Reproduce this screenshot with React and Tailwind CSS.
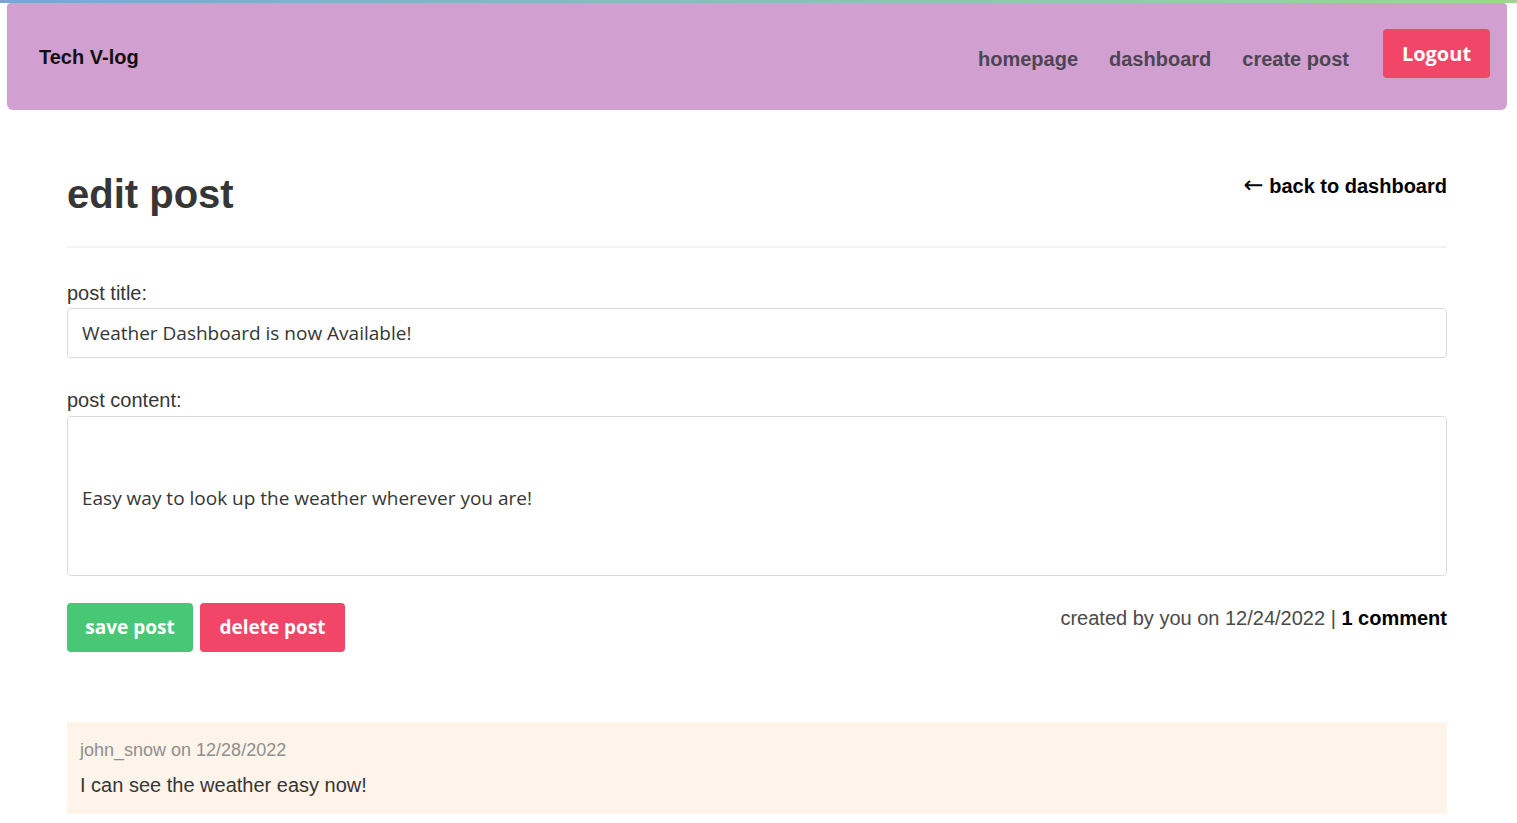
import { useState } from 'react';

const arial = { fontFamily: '"Liberation Sans", Arial, sans-serif' };
const ui = { fontFamily: '"Open Sans", "Noto Sans", sans-serif' };

function Header() {
  return (
    <header className="ml-[7px] mr-[10px] h-[107px] rounded-b-md rounded-t-sm bg-[#d19fd0] flex items-center justify-between pl-[32px] pr-[17px]">
      <a href="#" className="text-[20px] font-bold text-[#111]" style={arial}>Tech V-log</a>
      <nav className="flex items-center">
        <a href="#" className="text-[20px] font-bold text-[#4d4553] mt-[4px]" style={arial}>homepage</a>
        <a href="#" className="ml-[31px] text-[20px] font-bold text-[#4d4553] mt-[4px]" style={arial}>dashboard</a>
        <a href="#" className="ml-[31px] text-[20px] font-bold text-[#4d4553] mt-[4px]" style={arial}>create post</a>
        <button className="ml-[34px] mb-[6px] h-[49px] w-[107px] rounded-[4px] bg-[#f14668] text-[20px] font-bold text-white" style={ui}>Logout</button>
      </nav>
    </header>
  );
}

export default function App() {
  const [title, setTitle] = useState('Weather Dashboard is now Available!');
  const [content, setContent] = useState('Easy way to look up the weather wherever you are!');

  return (
    <div className="min-h-screen bg-white text-[#363636]" style={arial}>
      <div className="h-[3px] bg-gradient-to-r from-[#7ea3d8] to-[#9fd68e]" />
      <Header />

      <main className="ml-[67px] w-[1380px] pt-[60px]">
        <div className="flex items-start justify-between pb-[28px] border-b-2 border-[#f3f3f3]">
          <h1 className="text-[40px] font-bold leading-[48px] text-[#363636]">edit post</h1>
          <a href="#" className="mt-[1px] text-[20px] font-bold text-black">
            <span className="font-normal text-[24px] leading-[20px]" style={{ fontFamily: '"DejaVu Sans", sans-serif' }}>←</span> back to dashboard
          </a>
        </div>

        <form className="pt-[33px]" onSubmit={(e) => e.preventDefault()}>
          <label className="block text-[20px] leading-[24px] text-[#363636] mb-[3px]">post title:</label>
          <input
            value={title}
            onChange={(e) => setTitle(e.target.value)}
            className="block w-full h-[50px] rounded-[4px] border border-[#dbdbdb] px-[14px] text-[19px] text-[#363636] outline-none"
            style={ui}
          />

          <label className="block mt-[30px] text-[20px] leading-[24px] text-[#363636] mb-[4px]">post content:</label>
          <textarea
            value={content}
            onChange={(e) => setContent(e.target.value)}
            className="block w-full h-[160px] resize-none rounded-[4px] border border-[#dbdbdb] px-[14px] pt-[67px] text-[19px] text-[#363636] outline-none"
            style={ui}
          />

          <div className="mt-[27px] flex items-start justify-between">
            <div className="flex gap-[7px]">
              <button className="h-[49px] w-[126px] rounded-[4px] bg-[#48c774] text-[19px] font-bold text-white" style={ui}>save post</button>
              <button className="h-[49px] w-[145px] rounded-[4px] bg-[#f14668] text-[19px] font-bold text-white" style={ui}>delete post</button>
            </div>
            <p className="text-[20px] text-[#4a4a4a]">
              created by you on 12/24/2022 | <span className="font-bold text-black">1 comment</span>
            </p>
          </div>
        </form>

        <div className="mt-[70px] bg-[#fef4ea] px-[13px] pt-[15px] pb-[14px]">
          <p className="text-[18px] text-[#8f8f8f]">john_snow on 12/28/2022</p>
          <p className="mt-[6px] text-[20px] text-[#363636]">I can see the weather easy now!</p>
        </div>
      </main>
    </div>
  );
}
